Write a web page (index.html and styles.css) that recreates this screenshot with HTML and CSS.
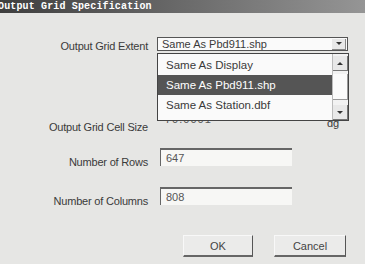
FILE: index.html
```html
<!DOCTYPE html>
<html lang="en">
<head>
  <meta charset="UTF-8">
  <title>Output Grid Specification</title>
  <link rel="stylesheet" href="styles.css">
</head>
<body>
<div class="titlebar">Output Grid Specification</div>
<div class="form">
  <div class="row">
    <div class="label">Output Grid Extent</div>
    <div class="combo-wrap">
      <div class="combo">
        <span class="combo-text">Same As Pbd911.shp</span>
        <span class="combo-btn"><span class="arrow-down"></span></span>
      </div>
      <div class="droplist">
        <div class="items">
          <div class="item">Same As Display</div>
          <div class="item selected">Same As Pbd911.shp</div>
          <div class="item">Same As Station.dbf</div>
        </div>
        <div class="scrollbar">
          <span class="sb-btn"><span class="arrow-up"></span></span>
          <span class="sb-thumb"></span>
          <span class="sb-btn"><span class="arrow-down"></span></span>
        </div>
      </div>
    </div>
  </div>
  <div class="row row-cell">
    <div class="label">Output Grid Cell Size</div>
    <div class="field field-cell">70.0001</div>
    <div class="units">dg</div>
  </div>
  <div class="row row-rows">
    <div class="label">Number of Rows</div>
    <div class="field">647</div>
  </div>
  <div class="row row-cols">
    <div class="label">Number of Columns</div>
    <div class="field">808</div>
  </div>
  <div class="buttons">
    <button class="btn btn-ok">OK</button>
    <button class="btn btn-cancel">Cancel</button>
  </div>
</div>
</body>
</html>
```

FILE: styles.css
```css
body { margin: 0; background: #e6e6e4; color: #3a3a3a;
  font-family: 'Liberation Sans', Arial, sans-serif; font-size: 11px;
  width: 365px; height: 264px; overflow: hidden; }
.titlebar { height: 13px; line-height: 13px; text-indent: -2px; letter-spacing: 0.15px;
  background: linear-gradient(to right, #3e3e3e, #6a6a6a 50%, #959595);
  color: #fff; font-family: 'Liberation Mono', monospace; font-weight: bold;
  font-size: 10px; white-space: nowrap; overflow: hidden; }
.form  { padding-top: 24px; }
.row   { display: flex; align-items: flex-start; }
.label { width: 148px; flex: none; text-align: right; line-height: 13px;
  margin-top: 3px; letter-spacing: -0.2px; }
.combo-wrap { position: relative; margin-left: 9px; }
.combo { width: 189px; height: 12px; border: 1px solid #555; background: #fafafa;
  display: flex; align-items: center; justify-content: space-between; }
.combo-text { padding-left: 4px; line-height: 12px; }
.combo-btn { width: 13px; height: 10px; margin-right: 1px; background: #e8e8e8;
  border-right: 1px solid #888; border-bottom: 1px solid #888;
  display: flex; align-items: center; justify-content: center; }
.arrow-down { width: 0; height: 0; border-left: 3px solid transparent;
  border-right: 3px solid transparent; border-top: 3px solid #333; }
.arrow-up { width: 0; height: 0; border-left: 3px solid transparent;
  border-right: 3px solid transparent; border-bottom: 3px solid #333; }
.droplist { position: absolute; top: 16px; left: 0; width: 190px; height: 66px;
  border: 1px solid #444; background: #fafafa; display: flex; z-index: 2; }
.items { flex: 1; padding-top: 1px; }
.item  { height: 20px; line-height: 20px; padding-left: 8px; font-size: 11.5px; }
.item.selected { background: #555; color: #fff; }
.scrollbar { width: 15px; display: flex; flex-direction: column; background: #f2f2f2;
  border-left: 1px solid #bbb; }
.sb-btn { height: 14px; margin-top: 2px; background: #e8e8e8;
  border-right: 1px solid #777; border-bottom: 1px solid #777;
  display: flex; align-items: center; justify-content: center; }
.sb-thumb { flex: 1; margin: 3px 0; background: #fbfbfb; border-right: 1px solid #999;
  border-bottom: 1px solid #999; }
.field { width: 126px; height: 16px; margin-left: 12px; line-height: 16px;
  padding-left: 5px; background: #f7f7f5; color: #555;
  border-top: 2px solid #666; border-left: 1px solid #666; }
.row-cell { margin-top: 61px; }
.row-cell .label { margin-top: 7px; }
.field-cell { border: none; background: none; line-height: 10px; letter-spacing: 1px; }
.units { margin-left: 36px; margin-top: 3px; }
.row-rows { margin-top: 14px; }
.row-rows .label, .row-cols .label { margin-top: 8px; }
.row-cols { margin-top: 18px; }
.buttons { display: flex; margin-top: 27px; padding-left: 183px; gap: 21px; }
.btn { height: 22px; padding: 0; font-family: inherit; font-size: 11px; color: #444;
  background: #ebebea; border: 1px solid #f8f8f8; border-right: 1px solid #555;
  border-bottom: 2px solid #666; }
.btn-ok { width: 70px; }
.btn-cancel { width: 72px; }
```
